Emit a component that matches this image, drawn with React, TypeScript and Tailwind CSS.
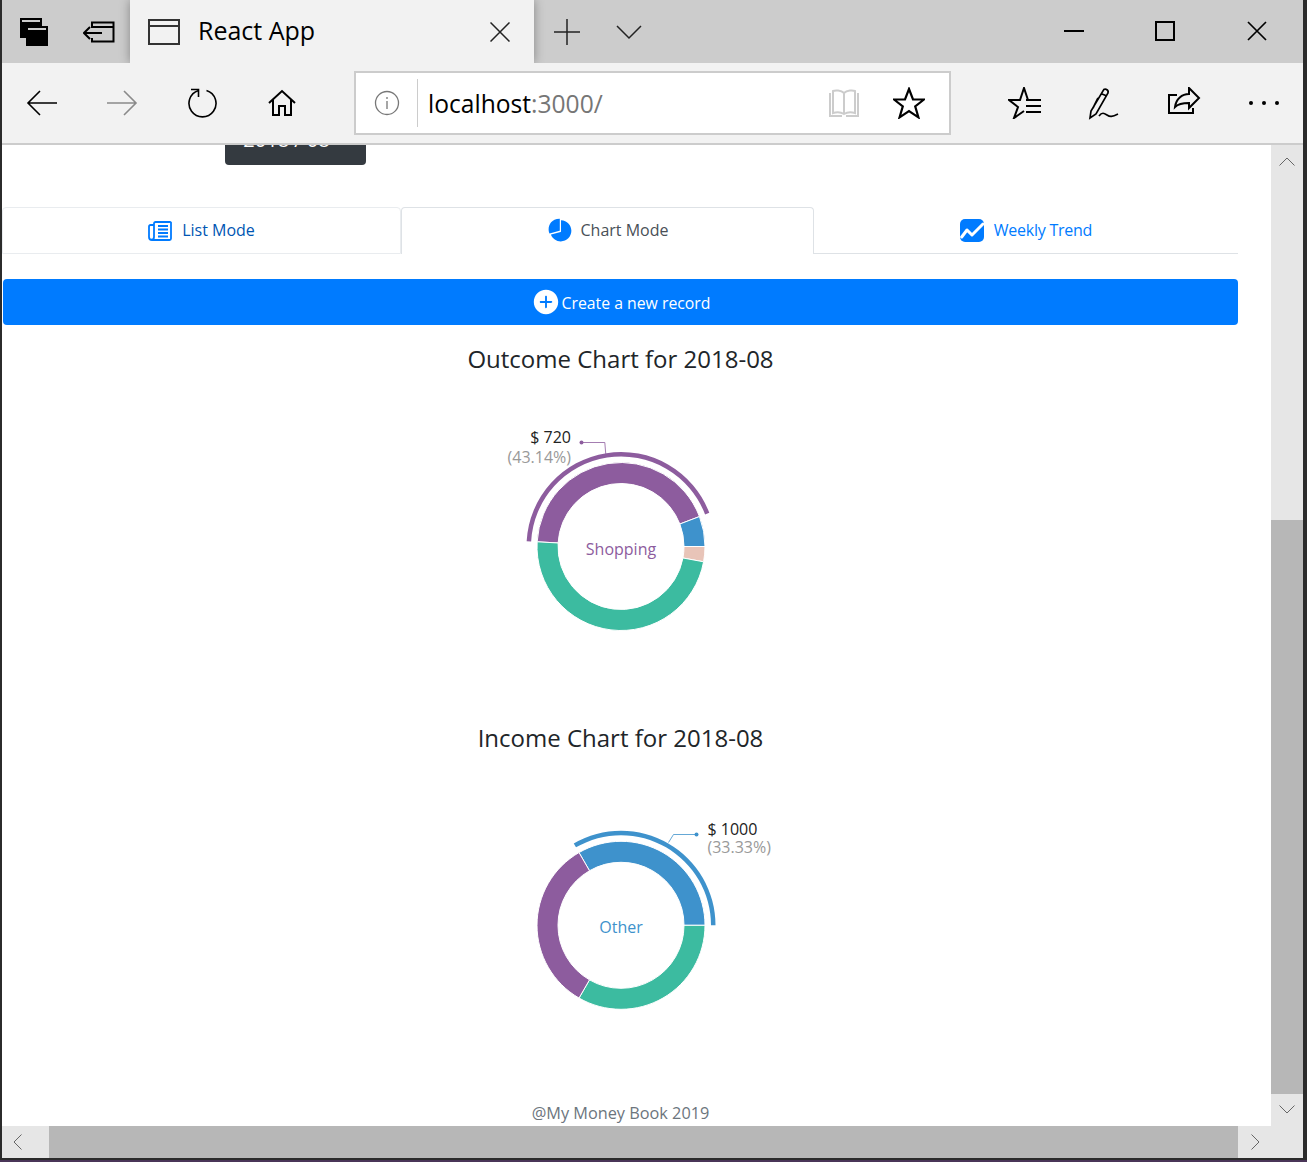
import { IoIosAddCircle, IoIosPie } from "react-icons/io";

const segoe = { fontFamily: "'Open Sans', 'Noto Sans', sans-serif" };

type Slice = { color: string; from: number; to: number };

// angles in degrees, counter-clockwise from 3 o'clock, `from` > `to`
function polar(r: number, deg: number, cx: number, cy: number) {
  const a = (deg * Math.PI) / 180;
  return [cx + r * Math.cos(a), cy - r * Math.sin(a)];
}

function ringPath(cx: number, cy: number, r0: number, r1: number, from: number, to: number) {
  const [ax, ay] = polar(r1, from, cx, cy);
  const [bx, by] = polar(r1, to, cx, cy);
  const [cx2, cy2] = polar(r0, to, cx, cy);
  const [dx, dy] = polar(r0, from, cx, cy);
  const large = from - to > 180 ? 1 : 0;
  return `M${ax} ${ay}A${r1} ${r1} 0 ${large} 1 ${bx} ${by}L${cx2} ${cy2}A${r0} ${r0} 0 ${large} 0 ${dx} ${dy}Z`;
}

const outcome: Slice[] = [
  { color: "#8d5c9e", from: 176.8, to: 20.9 },
  { color: "#3e92cc", from: 20.9, to: 0 },
  { color: "#e8c4b8", from: 0, to: -10.5 },
  { color: "#3cbba0", from: -10.5, to: -183.2 },
];

const income: Slice[] = [
  { color: "#3e92cc", from: 120, to: 0 },
  { color: "#3cbba0", from: 0, to: -120 },
  { color: "#8d5c9e", from: -120, to: -240 },
];

function Donut({
  slices,
  cy,
  label,
  leader,
  dot,
  amount,
  percent,
  percentDy,
  textX,
  anchor,
}: {
  slices: Slice[];
  cy: number;
  label: string;
  leader: string;
  dot: [number, number];
  amount: string;
  percent: string;
  percentDy: number;
  textX: number;
  anchor: "start" | "end";
}) {
  const c = slices[0].color;
  const cx = 200;
  return (
    <svg width="400" height="342" viewBox="0 0 400 342" className="block">
      {slices.map((s) => (
        <path key={s.color} d={ringPath(cx, cy, 63, 84, s.from, s.to)} fill={s.color} stroke="#fff" strokeWidth="1" />
      ))}
      <path d={ringPath(cx, cy, 90, 94.5, slices[0].from, slices[0].to)} fill={c} />
      <path d={leader} fill="none" stroke={c} strokeOpacity="0.8" strokeWidth="1" />
      <circle cx={dot[0]} cy={dot[1]} r="2" fill={c} />
      <text x={cx} y={cy + 8} textAnchor="middle" fontSize="16" fill={c} style={segoe}>
        {label}
      </text>
      <text x={textX} y={dot[1] + 0.5} textAnchor={anchor} fontSize="16" fill="#222" style={segoe}>
        {amount}
      </text>
      <text x={textX} y={dot[1] + percentDy} textAnchor={anchor} fontSize="16" fill="#999" style={segoe}>
        {percent}
      </text>
    </svg>
  );
}

function TitleBar() {
  return (
    <div className="flex h-[63px] overflow-hidden bg-[#cccccc]">
      <div className="flex w-[128px] items-center">
        <svg width="28" height="28" viewBox="0 0 28 28" className="ml-[18px]">
          <path d="M0 0h22v20H0zM6 8h22v20H6z" fill="#000" />
          <path d="M2 3h18M8 11h18" stroke="#ccc" strokeWidth="2" />
        </svg>
        <svg width="32" height="22" viewBox="0 0 32 22" className="ml-[35px]" fill="none" stroke="#000" strokeWidth="2">
          <path d="M9 7V1.500h21.500v19H9V17" />
          <path d="M9 6h22M1 12h18M7 6l-6 6 6 6" />
        </svg>
      </div>
      <div className="flex w-[404px] items-center bg-[#f2f2f2] pl-[18px] shadow-[0_0_10px_rgba(0,0,0,0.35)]">
        <svg width="32" height="26" viewBox="0 0 32 26" fill="none" stroke="#333" strokeWidth="2">
          <path d="M1 1h30v24H1zM1 7h30" />
        </svg>
        <span className="ml-[18px] pb-[2px] text-[25px] text-black" style={segoe}>
          React App
        </span>
        <svg width="20" height="20" viewBox="0 0 20 20" className="ml-auto mr-[24px]" stroke="#222" strokeWidth="1.5">
          <path d="M0.500 0.500l19 19M19.500 0.500l-19 19" />
        </svg>
      </div>
      <div className="ml-[19px] flex items-center">
        <svg width="28" height="28" viewBox="0 0 28 28" stroke="#222" strokeWidth="1.5">
          <path d="M14 1v26M1 14h26" />
        </svg>
        <svg width="26" height="16" viewBox="0 0 26 16" className="ml-[35px]" fill="none" stroke="#222" strokeWidth="1.5">
          <path d="M1 2l12 12L25 2" />
        </svg>
      </div>
      <div className="ml-auto flex items-center pb-[2px]">
        <div className="mr-[71px] h-[2px] w-[20px] bg-black" />
        <div className="mr-[72px] h-[20px] w-[20px] border-2 border-black" />
        <svg width="20" height="20" viewBox="0 0 20 20" className="mr-[36px]" stroke="#000" strokeWidth="1.7">
          <path d="M1 1l18 18M19 1L1 19" />
        </svg>
      </div>
    </div>
  );
}

function Toolbar() {
  return (
    <div className="flex h-[82px] items-center border-b-2 border-[#cccccc] bg-[#f2f2f2]">
      <svg width="32" height="28" viewBox="0 0 32 28" className="ml-[24px]" fill="none" stroke="#000" strokeWidth="1.6">
        <path d="M31 14H2M14 2L2 14l12 12" />
      </svg>
      <svg width="32" height="28" viewBox="0 0 32 28" className="ml-[48px]" fill="none" stroke="#8a8a8a" strokeWidth="1.6">
        <path d="M1 14h29M18 2l12 12-12 12" />
      </svg>
      <svg width="30" height="32" viewBox="0 0 30 32" className="ml-[49px]" fill="none" stroke="#000" strokeWidth="1.6">
        <path d="M19.500 3.500a13.500 13.500 0 1 1-8 0" />
        <path d="M4 2.500h7.500V10" />
      </svg>
      <svg width="30" height="28" viewBox="0 0 30 28" className="ml-[50px]" fill="none" stroke="#000" strokeWidth="2">
        <path d="M2 14L15 2l13 12M6 11v15h6v-9h6v9h6V11" />
      </svg>
      <div className="ml-[57px] flex h-[64px] w-[597px] items-center border-[2px] border-[#cccccc] bg-white">
        <svg width="26" height="26" viewBox="0 0 26 26" className="ml-[18px]" fill="none" stroke="#777" strokeWidth="1.3">
          <circle cx="13" cy="13" r="11.500" />
          <path d="M13 11v8M13 7v2" />
        </svg>
        <div className="ml-[17px] h-[48px] w-[1px] bg-[#cccccc]" />
        <span className="ml-[10px] pt-[2px] text-[24.6px] text-black" style={segoe}>
          localhost<span className="text-[#767676]">:3000/</span>
        </span>
        <svg width="32" height="30" viewBox="0 0 32 30" className="ml-auto" fill="none" stroke="#cccccc" strokeWidth="2">
          <path d="M16 5C13 2 7 2 5 3v22c3-1 8-1 11 1 3-2 8-2 11-1V3c-2-1-8-1-11 2zM16 5v21M2 5v23h12M30 5v23H18" />
        </svg>
        <svg width="32" height="32" viewBox="0 0 32 32" className="ml-[33px] mr-[24px]" fill="none" stroke="#000" strokeWidth="2.2">
          <path d="M16 2l4 10.500h11l-8.800 6.800 3.200 11L16 24l-9.400 6.300 3.200-11L1 12.500h11z" />
        </svg>
      </div>
      <svg width="34" height="32" viewBox="0 0 34 32" className="ml-[57px]" fill="none" stroke="#000" strokeWidth="2">
        <path d="M20 13L16 1l-4 12H1l9 7-4 11 10-7" />
        <path d="M18 13h15M18 19h15M18 25h15" />
      </svg>
      <svg width="34" height="34" viewBox="0 0 34 34" className="ml-[46px]" fill="none" stroke="#000" strokeWidth="1.7">
        <path d="M2 32l1-7L15 5c1-3 6-2 5 2L8 28zM14 8l5 2M10 12L5 22M11 30c3-4 5-3 8-1s5 2 11-1" />
      </svg>
      <svg width="34" height="32" viewBox="0 0 34 32" className="ml-[45px]" fill="none" stroke="#000" strokeWidth="2">
        <path d="M10 8H2v18h24v-5" />
        <path d="M22 1l10 10-10 10v-5c-6 0-11 1-14 4 1-8 7-13 14-13z" />
      </svg>
      <div className="ml-[48px] flex gap-[9px]">
        <div className="h-[4px] w-[4px] rounded-full bg-black" />
        <div className="h-[4px] w-[4px] rounded-full bg-black" />
        <div className="h-[4px] w-[4px] rounded-full bg-black" />
      </div>
    </div>
  );
}

function PaperIcon() {
  return (
    <svg width="24" height="20" viewBox="0 0 24 20" className="mr-[2px] mt-[2px]" fill="none" stroke="#007bff">
      <path d="M6 4H2.500A1.500 1.500 0 0 0 1 5.500V16a3 3 0 0 0 3 3h17.500a1.500 1.500 0 0 0 1.500-1.500v-16A1.500 1.500 0 0 0 21.500 1h-14A1.500 1.500 0 0 0 6 2.500V16a3 3 0 0 1-3 3" strokeWidth="1.8" />
      <path d="M10 5h10M10 8.500h10M10 12h10M10 15.500h10" strokeWidth="2" />
    </svg>
  );
}

function TrendIcon() {
  return (
    <svg width="24" height="23" viewBox="0 0 24 23" className="mr-[2px]">
      <rect width="24" height="23" rx="5" fill="#007bff" />
      <path d="M1.700 18L7 11l5 5L23 5" fill="none" stroke="#fff" strokeWidth="3" strokeLinecap="round" strokeLinejoin="round" />
    </svg>
  );
}

function Tab({ label, icon, className }: { label: string; icon: React.ReactNode; className: string }) {
  return (
    <div className={`flex h-[47px] items-center justify-center gap-[8px] rounded-t-[4px] text-[16px] ${className}`}>
      {icon}
      {label}
    </div>
  );
}

function Page() {
  return (
    <div className="h-[981px] w-[1269px] overflow-hidden bg-white" style={segoe}>
      <div className="-mt-[16px] ml-[223px] flex h-[36px] w-[141px] items-center justify-center rounded-[4px] bg-[#343a40] pb-[14px] pr-[18px] text-[20px] text-white">
        2018 / 08
      </div>
      <div className="mt-[42px] flex w-[1236px]">
        <Tab label="List Mode" className="w-[399px] border border-[#e9ecef] pb-[2px] text-[#0056b3]" icon={<PaperIcon />} />
        <Tab label="Chart Mode" className="w-[413px] border border-b-0 border-[#dee2e6] bg-white pb-[2px] text-[#495057]" icon={<IoIosPie size={26} color="#007bff" />} />
        <Tab label="Weekly Trend" className="w-[424px] border-b border-[#dee2e6] tracking-[-0.25px] text-[#007bff]" icon={<TrendIcon />} />
      </div>
      <div className="ml-[1px] mt-[25px] flex h-[46px] w-[1235px] items-center justify-center rounded-[4px] bg-[#007bff] text-[15.8px] text-white">
        <IoIosAddCircle size={30} color="#fff" />
        <span className="ml-[1px] pt-[4px]">Create a new record</span>
      </div>
      <div className="ml-[1px] mt-[17px] flex w-[1235px] flex-col items-center text-[#212529]">
        <h4 className="-mt-[1px] mb-[1px] h-[36px] text-[24px] leading-[36px]">Outcome Chart for 2018-08</h4>
        <Donut
          slices={outcome}
          cy={168.5}
          label="Shopping"
          leader="M184.800 76.500L183.800 64.500H160.500"
          dot={[160.5, 64.5]}
          amount="$ 720"
          percent="(43.14%)"
          percentDy={20}
          textX={150}
          anchor="end"
        />
        <h4 className="h-[36px] text-[24px] leading-[36px]">Income Chart for 2018-08</h4>
        <Donut
          slices={income}
          cy={169.3}
          label="Other"
          leader="M247.500 86.500L252.500 78.500H275.500"
          dot={[275.5, 78.5]}
          amount="$ 1000"
          percent="(33.33%)"
          percentDy={18.5}
          textX={286.5}
          anchor="start"
        />
        <div className="mt-[3px] text-[16.3px] leading-[24px] text-[#6c757d]">@My Money Book 2019</div>
      </div>
    </div>
  );
}

function ScrollV() {
  return (
    <div className="flex h-[981px] w-[32px] flex-col bg-[#e6e6e6]">
      <div className="flex h-[375px] justify-center pt-[12px]">
        <svg width="16" height="9" viewBox="0 0 16 9" fill="none" stroke="#666" strokeWidth="1">
          <path d="M0.500 8.500L8 1l7.500 7.500" />
        </svg>
      </div>
      <div className="h-[574px] bg-[#b7b7b7]" />
      <div className="flex flex-1 justify-center pt-[11px]">
        <svg width="16" height="9" viewBox="0 0 16 9" fill="none" stroke="#666" strokeWidth="1">
          <path d="M0.500 0.500L8 8l7.500-7.500" />
        </svg>
      </div>
    </div>
  );
}

function ScrollH() {
  return (
    <div className="flex h-[32px] bg-[#e6e6e6]">
      <div className="flex w-[47px] items-center pl-[11px]">
        <svg width="9" height="16" viewBox="0 0 9 16" fill="none" stroke="#666" strokeWidth="1">
          <path d="M8.500 0.500L1 8l7.500 7.500" />
        </svg>
      </div>
      <div className="w-[1189px] bg-[#b7b7b7]" />
      <div className="flex w-[33px] items-center pl-[13px]">
        <svg width="9" height="16" viewBox="0 0 9 16" fill="none" stroke="#666" strokeWidth="1">
          <path d="M0.500 0.500L8 8l-7.500 7.500" />
        </svg>
      </div>
    </div>
  );
}

export default function App() {
  return (
    <div className="h-[1162px] w-[1307px] overflow-hidden bg-[#2b2b2b] pl-[2px] pr-[4px]">
      <div className="w-[1301px]">
        <TitleBar />
        <Toolbar />
        <div className="flex">
          <Page />
          <ScrollV />
        </div>
        <ScrollH />
      </div>
      <div className="-ml-[2px] mt-[2px] h-[2px] w-[1307px] bg-[#4a3558]" />
    </div>
  );
}
